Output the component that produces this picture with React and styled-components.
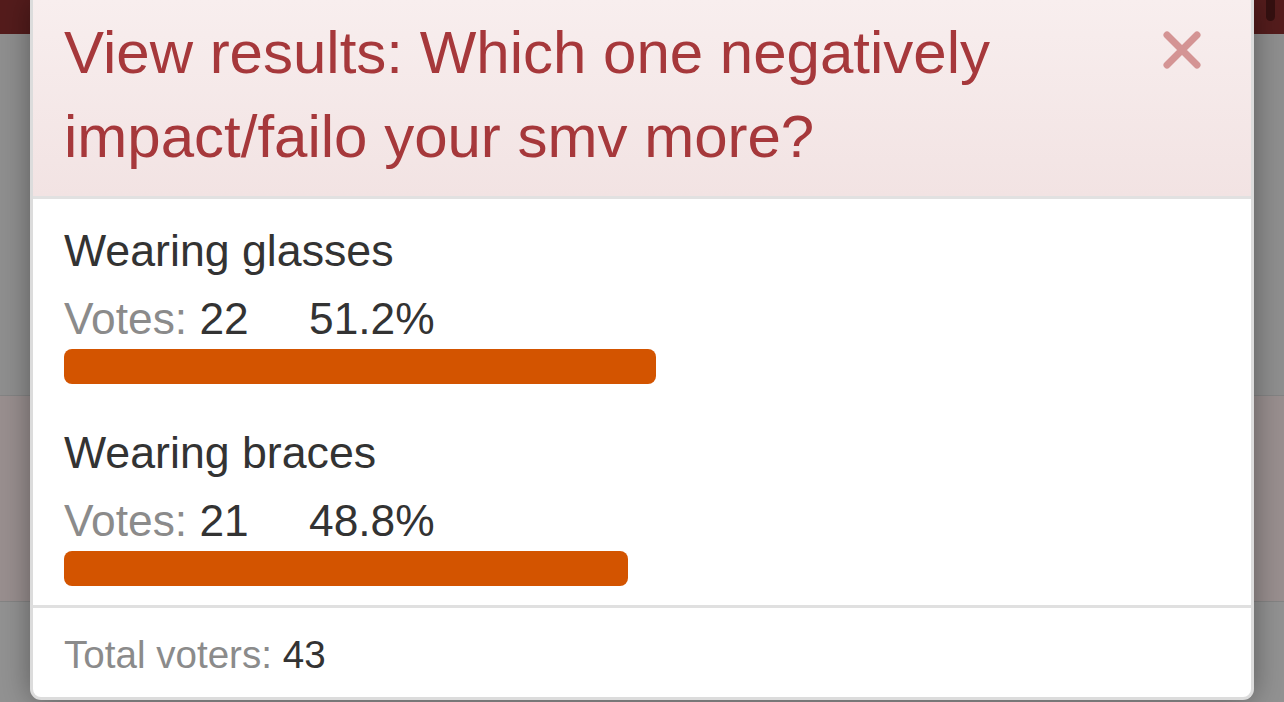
import styled, { createGlobalStyle } from "styled-components";

const GlobalStyle = createGlobalStyle`
  html, body {
    margin: 0;
    padding: 0;
    overflow: hidden;
  }
  body {
    font-family: "Liberation Sans", Arial, sans-serif;
  }
`;

// Page sitting behind the dimmed overlay
const Page = styled.div`
  position: fixed;
  inset: 0;
  display: flex;
  flex-direction: column;
  background-color: #8f8f8f;
`;

const NavBar = styled.div`
  height: 34px;
  flex-shrink: 0;
  background-color: #541c1c;
  display: flex;
  justify-content: flex-end;
  padding-right: 9px;
`;

const NavHandle = styled.span`
  width: 9px;
  height: 21px;
  border-radius: 0 0 5px 5px;
  background-color: #351010;
`;

const Band = styled.div`
  height: ${(p) => p.$height}px;
  flex-shrink: 0;
  background-color: ${(p) => p.$color};
  border-bottom: ${(p) => (p.$line ? "1px solid #848484" : "none")};
`;

const Overlay = styled.div`
  position: fixed;
  inset: 0;
  display: flex;
  justify-content: center;
  align-items: flex-start;
`;

const Modal = styled.div`
  width: 1224px;
  box-sizing: border-box;
  border: 3px solid #dcdcdc;
  border-top: none;
  border-radius: 0 0 11px 11px;
  background-color: #fff;
  box-shadow: 0 0 30px rgba(0, 0, 0, 0.38);
  overflow: hidden;
`;

const Header = styled.div`
  display: flex;
  align-items: flex-start;
  justify-content: space-between;
  padding: 11px 31px 17px 31px;
  background: linear-gradient(#f8eeee, #f2e3e3);
  border-bottom: 3px solid #e1e1e1;
`;

const Title = styled.h3`
  margin: 0;
  font-size: 60px;
  line-height: 84px;
  font-weight: 400;
  color: #a6383b;
  max-width: 1000px;
`;

const CloseButton = styled.button`
  margin: 19px 18px 0 0;
  padding: 0;
  width: 40px;
  height: 40px;
  border: none;
  background: none;
  cursor: pointer;
  display: flex;
  align-items: center;
  justify-content: center;
`;

const Body = styled.div`
  padding: 26px 31px 19px 31px;
  display: flex;
  flex-direction: column;
  gap: 43px;
`;

const Option = styled.div`
  display: flex;
  flex-direction: column;
`;

const OptionLabel = styled.div`
  font-size: 44.7px;
  line-height: 52px;
  color: #333;
`;

const VoteLine = styled.div`
  display: flex;
  font-size: 44.3px;
  line-height: 52px;
  color: #333;
  margin-top: 16px;
`;

const VoteCount = styled.span`
  width: 245px;
`;

const Muted = styled.span`
  color: #8b8b8b;
`;

const Track = styled.div`
  margin-top: 4px;
  height: 35px;
`;

const Fill = styled.div`
  height: 100%;
  border-radius: 8px;
  background-color: #d35400;
`;

const Footer = styled.div`
  padding: 24px 31px 19px 31px;
  border-top: 3px solid #e0e0e0;
  font-size: 38.6px;
  line-height: 46px;
  color: #333;
`;

const CloseIcon = () => (
  <svg width="40" height="40" viewBox="0 0 40 40">
    <path
      d="M5 5 L35 35 M35 5 L5 35"
      stroke="#d49494"
      strokeWidth="7"
      strokeLinecap="round"
    />
  </svg>
);

const results = [
  { label: "Wearing glasses", votes: 22 },
  { label: "Wearing braces", votes: 21 },
];

const App = () => {
  const total = results.reduce((sum, r) => sum + r.votes, 0);

  return (
    <>
      <GlobalStyle />
      <Page>
        <NavBar>
          <NavHandle />
        </NavBar>
        <Band $height={361} $color="#8f8f8f" $line />
        <Band $height={205} $color="#998f8f" $line />
        <Band $height={120} $color="#929292" />
      </Page>
      <Overlay>
        <Modal>
          <Header>
            <Title>View results: Which one negatively impact/failo your smv more?</Title>
            <CloseButton aria-label="Close">
              <CloseIcon />
            </CloseButton>
          </Header>
          <Body>
            {results.map((r) => {
              const pct = ((r.votes / total) * 100).toFixed(1);
              return (
                <Option key={r.label}>
                  <OptionLabel>{r.label}</OptionLabel>
                  <VoteLine>
                    <VoteCount>
                      <Muted>Votes:</Muted> {r.votes}
                    </VoteCount>
                    <span>{pct}%</span>
                  </VoteLine>
                  <Track>
                    <Fill style={{ width: `${pct}%` }} />
                  </Track>
                </Option>
              );
            })}
          </Body>
          <Footer>
            <Muted>Total voters:</Muted> {total}
          </Footer>
        </Modal>
      </Overlay>
    </>
  );
};

export default App;
